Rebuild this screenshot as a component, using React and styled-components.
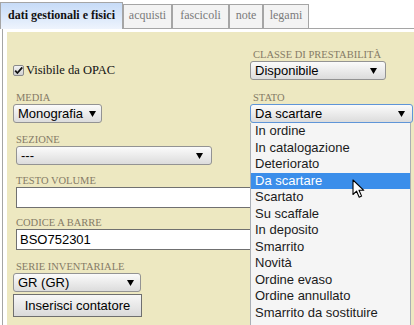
import React from "react";
import styled, { createGlobalStyle } from "styled-components";

const GlobalStyle = createGlobalStyle`
  html, body {
    margin: 0;
    padding: 0;
    background: #fff;
  }
  body {
    font-family: "Liberation Serif", serif;
  }
`;

const Page = styled.div`
  width: 414px;
  height: 325px;
  overflow: hidden;
  display: flex;
  flex-direction: column;
`;

const TabBar = styled.div`
  display: flex;
  align-items: flex-end;
  height: 29px;
  box-sizing: border-box;
  border-bottom: 1px solid #a5a5a5;
  flex-shrink: 0;
`;

const Tab = styled.div`
  box-sizing: border-box;
  width: ${(p) => p.$w}px;
  height: ${(p) => (p.$active ? 27 : 24)}px;
  margin-bottom: ${(p) => (p.$active ? -1 : 0)}px;
  padding-top: ${(p) => (p.$active ? 5 : 3)}px;
  border: 1px solid #a5a5a5;
  border-bottom: none;
  text-align: center;
  font-family: "Liberation Serif", serif;
  font-size: 12px;
  line-height: 14px;
  font-weight: ${(p) => (p.$active ? "bold" : "normal")};
  color: ${(p) => (p.$active ? "#111" : "#7a7a7a")};
  background: ${(p) =>
    p.$active ? "linear-gradient(#c6dbf7, #eef4fd)" : "#f3f3f3"};
`;

const Panel = styled.div`
  flex: 1;
  margin-left: 2px;
  border-left: 1px solid #a5a5a5;
  padding: 3px 0 0 4px;
  display: flex;
`;

const Content = styled.div`
  flex: 1;
  background: #ede8c1;
  padding: 16px 0 0 6px;
`;

const TopGrid = styled.div`
  display: grid;
  grid-template-columns: 237px 1fr;
  row-gap: 11px;
`;

const Field = styled.div`
  position: relative;
  margin-top: ${(p) => p.$mt || 0}px;
`;

const Label = styled.div`
  padding-left: 3px;
  height: 13px;
  font-family: "Liberation Serif", serif;
  font-size: 10.5px;
  line-height: 13px;
  color: #857b66;
  white-space: nowrap;
`;

const CheckRow = styled.label`
  align-self: end;
  display: flex;
  align-items: center;
  height: 19px;
  padding-top: 1px;
  gap: 2px;
  font-family: "Liberation Serif", serif;
  font-size: 12.5px;
  color: #111;
`;

const SelectBox = styled.div`
  box-sizing: border-box;
  display: flex;
  align-items: center;
  justify-content: space-between;
  width: ${(p) => p.$w}px;
  height: 19px;
  margin-left: ${(p) => p.$ml || 0}px;
  padding: 0 ${(p) => p.$pr || 7}px 0 4px;
  border: 1px solid ${(p) => (p.$focus ? "#5f95d8" : "#939393")};
  border-radius: 3px;
  background: linear-gradient(#fbfbfb, #dcdcdc);
  font-family: "Liberation Sans", sans-serif;
  font-size: 13px;
  color: #000;
  white-space: nowrap;
`;

const TextInput = styled.div`
  box-sizing: border-box;
  width: 380px;
  height: 21px;
  margin-left: 3px;
  padding-left: 3px;
  border: 1px solid #707070;
  background: #fff;
  font-family: "Liberation Sans", sans-serif;
  font-size: 13px;
  line-height: 19px;
  color: #000;
`;

const Button = styled.div`
  box-sizing: border-box;
  width: 129px;
  height: 23px;
  margin-top: 2px;
  border: 1px solid #6f6f6f;
  background: linear-gradient(#f7f7f7, #dadada);
  text-align: center;
  font-family: "Liberation Sans", sans-serif;
  font-size: 13px;
  line-height: 21px;
  color: #000;
`;

const Dropdown = styled.div`
  position: absolute;
  top: 100%;
  left: 0;
  width: 161px;
  box-sizing: border-box;
  background: #f5f5f5;
  border: 1px solid #a9aeb5;
  border-top: none;
  padding-bottom: 12px;
  z-index: 5;
`;

const Option = styled.div`
  height: 16.5px;
  line-height: 16.5px;
  padding-left: 4px;
  font-family: "Liberation Sans", sans-serif;
  font-size: 13px;
  color: ${(p) => (p.$active ? "#fff" : "#1b1b1b")};
  background: ${(p) => (p.$active ? "#3b8eea" : "transparent")};
  white-space: nowrap;
`;

const Pointer = styled.svg`
  position: absolute;
  left: 101px;
  top: 56px;
`;

const Arrow = () => (
  <svg width="7" height="6" viewBox="0 0 7 6">
    <polygon points="0,0 7,0 3.5,6" fill="#000" />
  </svg>
);

const Select = ({ children, ...rest }) => (
  <SelectBox {...rest}>
    <span>{children}</span>
    <Arrow />
  </SelectBox>
);

const CheckBox = () => (
  <svg width="11" height="11" viewBox="0 0 11 11">
    <defs>
      <linearGradient id="cb" x1="0" y1="0" x2="0" y2="1">
        <stop offset="0" stopColor="#f4f4f4" />
        <stop offset="1" stopColor="#cfcfcf" />
      </linearGradient>
    </defs>
    <rect x="0.5" y="0.5" width="10" height="10" rx="1.5" fill="url(#cb)" stroke="#8a8a8a" />
    <path d="M2.2 5.6 L4.4 8 L9.3 2.4" fill="none" stroke="#111" strokeWidth="1.8" />
  </svg>
);

const tabs = [
  { label: "dati gestionali e fisici", w: 123, active: true },
  { label: "acquisti", w: 49 },
  { label: "fascicoli", w: 57 },
  { label: "note", w: 34 },
  { label: "legami", w: 46 },
];

const stati = [
  "In ordine",
  "In catalogazione",
  "Deteriorato",
  "Da scartare",
  "Scartato",
  "Su scaffale",
  "In deposito",
  "Smarrito",
  "Novità",
  "Ordine evaso",
  "Ordine annullato",
  "Smarrito da sostituire",
];

export default function App() {
  return (
    <Page>
      <GlobalStyle />
      <TabBar>
        {tabs.map((t) => (
          <Tab key={t.label} $w={t.w} $active={t.active}>
            {t.label}
          </Tab>
        ))}
      </TabBar>
      <Panel>
        <Content>
          <TopGrid>
            <CheckRow>
              <CheckBox />
              Visibile da OPAC
            </CheckRow>
            <Field>
              <Label>CLASSE DI PRESTABILITÀ</Label>
              <Select $w={136} $pr={8}>
                Disponibile
              </Select>
            </Field>
            <Field>
              <Label>MEDIA</Label>
              <Select $w={89} $pr={5}>
                Monografia
              </Select>
            </Field>
            <Field>
              <Label>STATO</Label>
              <Select $w={163} $pr={7} $focus>
                Da scartare
              </Select>
              <Dropdown>
                {stati.map((s) => (
                  <Option key={s} $active={s === "Da scartare"}>
                    {s}
                  </Option>
                ))}
                <Pointer width="13" height="20" viewBox="0 0 13 20">
                  <path
                    d="M1 1 L1 15.5 L4.6 12.2 L7.2 18.2 L9.6 17.1 L7 11.3 L11.8 11.3 Z"
                    fill="#fff"
                    stroke="#000"
                    strokeWidth="1.1"
                    strokeLinejoin="round"
                  />
                </Pointer>
              </Dropdown>
            </Field>
          </TopGrid>

          <Field $mt={10}>
            <Label>SEZIONE</Label>
            <Select $w={196} $ml={3} $pr={8}>
              ---
            </Select>
          </Field>

          <Field $mt={9}>
            <Label>TESTO VOLUME</Label>
            <TextInput />
          </Field>

          <Field $mt={8}>
            <Label>CODICE A BARRE</Label>
            <TextInput>BSO752301</TextInput>
          </Field>

          <Field $mt={10}>
            <Label>SERIE INVENTARIALE</Label>
            <Select $w={128} $pr={6}>
              GR (GR)
            </Select>
            <Button>Inserisci contatore</Button>
          </Field>
        </Content>
      </Panel>
    </Page>
  );
}
